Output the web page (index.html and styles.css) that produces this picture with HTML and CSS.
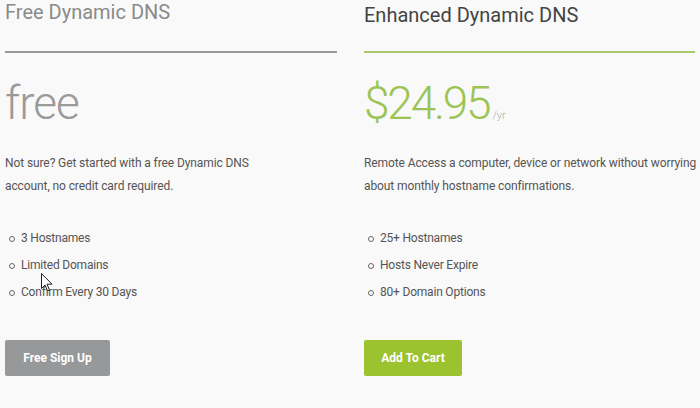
FILE: index.html
```html
<!DOCTYPE html>
<html>
<head>
<meta charset="utf-8">
<link rel="stylesheet" href="styles.css">
</head>
<body>
<div class="plans">
  <section class="plan plan-free">
    <h2 class="plan-title">Free Dynamic DNS</h2>
    <div class="plan-price"><span class="amount">free</span></div>
    <p class="plan-desc">Not sure? Get started with a free Dynamic DNS<br>account, no credit card required.</p>
    <ul class="features">
      <li>3 Hostnames</li>
      <li>Limited Domains</li>
      <li>Confirm Every 30 Days</li>
    </ul>
    <a class="btn btn-gray">Free Sign Up</a>
  </section>
  <section class="plan plan-enhanced">
    <h2 class="plan-title">Enhanced Dynamic DNS</h2>
    <div class="plan-price"><span class="amount">$24.95</span><span class="per">/yr</span></div>
    <p class="plan-desc">Remote Access a computer, device or network without worrying<br>about monthly hostname confirmations.</p>
    <ul class="features">
      <li>25+ Hostnames</li>
      <li>Hosts Never Expire</li>
      <li>80+ Domain Options</li>
    </ul>
    <a class="btn btn-green">Add To Cart</a>
  </section>
</div>
<svg class="cursor" width="12" height="19" viewBox="0 0 12 19"><path d="M0.5 0.5 L0.5 15.5 L4 12 L6.5 18 L8.5 17 L6 11.2 L11 11.2 Z" fill="#fff" stroke="#222" stroke-width="1"/></svg>
</body>
</html>
```
FILE: styles.css
```css
html, body {
  margin: 0;
  padding: 0;
  background: #f9f9f9;
}
body {
  font-family: Roboto, "Open Sans", sans-serif;
  width: 700px;
  height: 408px;
  overflow: hidden;
  position: relative;
}
.plans {
  display: grid;
  grid-template-columns: 332px 336px;
  column-gap: 27px;
  padding-left: 5px;
}
.plan-title {
  margin: 0;
  font-size: 20px;
  font-weight: 400;
  line-height: 24px;
  height: 53px;
  box-sizing: border-box;
  border-bottom: 2px solid #999;
}
.plan-free .plan-title {
  color: #8a8a8a;
  padding-top: 0;
}
.plan-enhanced .plan-title {
  color: #444;
  border-bottom-color: #a9c96c;
  padding-top: 3px;
  margin-right: 5px;
}
.plan-price {
  height: 78px;
  display: flex;
  align-items: baseline;
  padding-top: 21px;
  box-sizing: border-box;
  line-height: 58px;
}
.amount {
  font-size: 46px;
  font-weight: 300;
}
.plan-free .amount {
  color: #9a9a9a;
  letter-spacing: -1px;
}
.plan-enhanced .amount {
  color: #9cc455;
  letter-spacing: -2.2px;
}
.per {
  font-size: 11px;
  color: #aaa;
  font-weight: 300;
  margin-left: 3px;
}
.plan-desc {
  margin: 21px 0 0;
  font-size: 12px;
  letter-spacing: -0.1px;
  line-height: 23px;
  color: #555;
  white-space: nowrap;
}
.features {
  list-style: none;
  margin: 27px 0 0;
  padding: 0;
}
.features li {
  position: relative;
  font-size: 12px;
  letter-spacing: -0.2px;
  color: #555;
  line-height: 27px;
  padding-left: 16px;
}
.features li::before {
  content: "";
  position: absolute;
  left: 4px;
  top: 11px;
  width: 4px;
  height: 4px;
  border: 1px solid #666;
  border-radius: 50%;
}
.btn {
  display: inline-flex;
  align-items: center;
  justify-content: center;
  margin-top: 34px;
  height: 36px;
  border-radius: 2px;
  color: #fff;
  font-weight: 700;
  font-size: 12px;
}
.btn-gray {
  width: 105px;
  background: #97989a;
}
.btn-green {
  width: 98px;
  background: #9ac32f;
}
.cursor {
  position: absolute;
  left: 41px;
  top: 273px;
}
```
